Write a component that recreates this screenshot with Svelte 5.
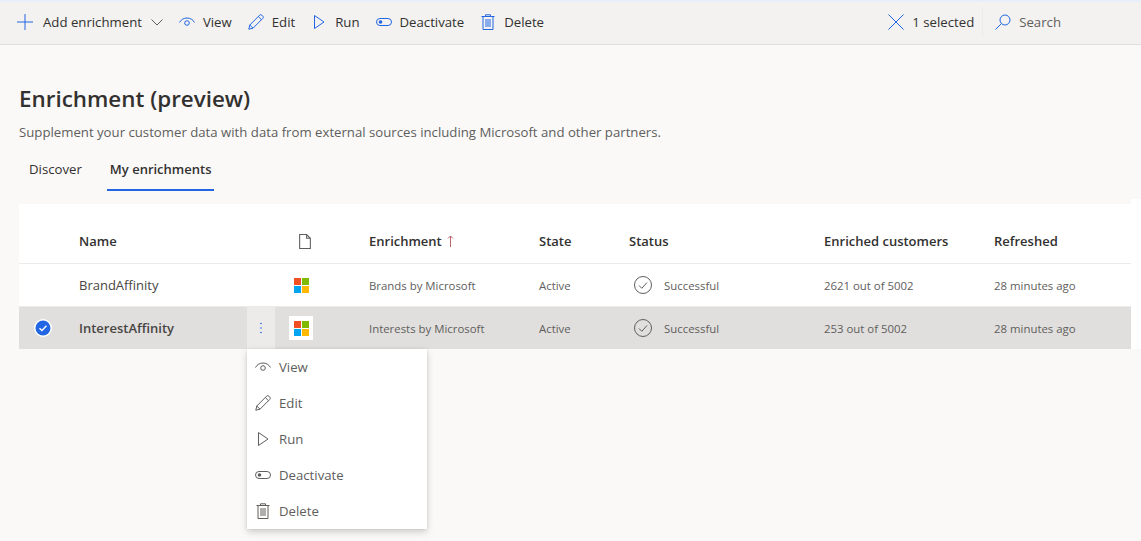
<script lang="ts">
  const rows = [
    { name: "BrandAffinity", enrichment: "Brands by Microsoft", state: "Active", status: "Successful", customers: "2621 out of 5002", refreshed: "28 minutes ago", selected: false },
    { name: "InterestAffinity", enrichment: "Interests by Microsoft", state: "Active", status: "Successful", customers: "253 out of 5002", refreshed: "28 minutes ago", selected: true },
  ];
  const actions = ["view", "edit", "run", "deactivate", "delete"];
  const labels: Record<string, string> = { view: "View", edit: "Edit", run: "Run", deactivate: "Deactivate", delete: "Delete" };
</script>

{#snippet icon(kind: string)}
  <svg class="icon" viewBox="0 0 16 16" fill="none" stroke="currentColor" stroke-width="1">
    {#if kind === "view"}
      <path d="M0.5 8.5C2 5.500 5 4 8 4s6 1.500 7.500 4.500" />
      <circle cx="8" cy="9" r="2.300" />
    {:else if kind === "edit"}
      <path d="M0.8 15.2l1-4.200L11.600 1.200a1.600 1.600 0 0 1 2.300 0l.9.9a1.600 1.600 0 0 1 0 2.300L5 14.200z" />
      <path d="M1.800 11l3.200 3.200M10.300 2.500l3.200 3.200" />
    {:else if kind === "run"}
      <path d="M3.500 1.500L13 8l-9.500 6.500z" />
    {:else if kind === "deactivate"}
      <rect x="0.5" y="4.5" width="15" height="7" rx="3.5" />
      <circle cx="4.500" cy="8" r="1.800" fill="currentColor" stroke="none" />
    {:else if kind === "delete"}
      <path d="M1.500 2.500h13M5.500 2.500V.8h5v1.700M3 2.500v13h10v-13M6 5v8M8 5v8M10 5v8" />
    {/if}
  </svg>
{/snippet}

{#snippet logo()}
  <svg class="logo" viewBox="0 0 15 15">
    <rect width="7" height="7" fill="#f25022" />
    <rect x="8" width="7" height="7" fill="#7fba00" />
    <rect y="8" width="7" height="7" fill="#00a4ef" />
    <rect x="8" y="8" width="7" height="7" fill="#ffb900" />
  </svg>
{/snippet}

<div class="page">
  <div class="commandbar">
    <div class="commands">
      <button class="cmd add">
        <svg class="icon plus" viewBox="0 0 16 16" fill="none" stroke="currentColor" stroke-width="1"><path d="M8 0v16M0 8h16" /></svg>
        <span>Add enrichment</span>
        <svg class="chevron" viewBox="0 0 12 12" fill="none" stroke="#605e5c" stroke-width="1"><path d="M0.500 3.500L6 9l5.500-5.500" /></svg>
      </button>
      {#each actions as a}
        <button class="cmd">
          {@render icon(a)}
          <span>{labels[a]}</span>
        </button>
      {/each}
    </div>
    <div class="side">
      <button class="cmd">
        <svg class="icon" viewBox="0 0 16 16" fill="none" stroke="currentColor" stroke-width="1"><path d="M0.500 0.500l15 15M15.500 0.500l-15 15" /></svg>
        <span>1 selected</span>
      </button>
      <div class="search">
        <svg class="icon" viewBox="0 0 16 16" fill="none" stroke="currentColor" stroke-width="1"><circle cx="10" cy="6" r="5" /><path d="M6.500 9.500L0.500 15.500" /></svg>
        <span>Search</span>
      </div>
    </div>
  </div>

  <header class="head">
    <h1>Enrichment (preview)</h1>
    <p>Supplement your customer data with data from external sources including Microsoft and other partners.</p>
    <nav class="tabs">
      <div class="tab">Discover</div>
      <div class="tab active">My enrichments</div>
    </nav>
  </header>

  <section class="table">
    <div class="row header">
      <div></div>
      <div>Name</div>
      <div></div>
      <div class="logocell">
        <svg class="docicon" viewBox="0 0 13 14" fill="none" stroke="#605e5c" stroke-width="1"><path d="M1.500 0.500h6.500l3.500 3.500v9.500h-10zM8 0.500v3.500h3.500" /></svg>
      </div>
      <div class="sorted">
        Enrichment
        <svg class="arrow" viewBox="0 0 7 12" fill="none" stroke="#a4262c" stroke-width="1"><path d="M3.500 12V1M1 3.500l2.500-2.500 2.500 2.500" /></svg>
      </div>
      <div>State</div>
      <div>Status</div>
      <div>Enriched customers</div>
      <div>Refreshed</div>
    </div>
    {#each rows as row}
      <div class="row" class:selected={row.selected}>
        <div class="check">
          {#if row.selected}
            <svg viewBox="0 0 18 18" class="checkmark">
              <circle cx="9" cy="9" r="9" fill="#fff" />
              <circle cx="9" cy="9" r="7.500" fill="#2266e3" />
              <path d="M5.500 9.200l2.400 2.300 4.600-4.700" fill="none" stroke="#fff" stroke-width="1.300" />
            </svg>
          {/if}
        </div>
        <div class="name">{row.name}</div>
        <div class="more">
          {#if row.selected}
            <svg viewBox="0 0 4 12" class="dots"><circle cx="2" cy="1.500" r="0.800" /><circle cx="2" cy="6" r="0.800" /><circle cx="2" cy="10.500" r="0.800" /></svg>
          {/if}
        </div>
        <div class="logocell"><span class="logobox">{@render logo()}</span></div>
        <div class="small">{row.enrichment}</div>
        <div class="small">{row.state}</div>
        <div class="small statuscell">
          <svg class="statusicon" viewBox="0 0 18 18" fill="none" stroke="#605e5c" stroke-width="1"><circle cx="9" cy="9" r="8.500" /><path d="M5 9.500l2.800 2.800L13 6.500" /></svg>
          <span>{row.status}</span>
        </div>
        <div class="small">{row.customers}</div>
        <div class="small">{row.refreshed}</div>
      </div>
    {/each}
    <div class="menu">
      {#each actions as a}
        <div class="menuitem">
          {@render icon(a)}
          <span>{labels[a]}</span>
        </div>
      {/each}
    </div>
  </section>
</div>

<style>
  :global(body) {
    margin: 0;
    background: #faf9f8;
  }
  .page {
    height: 541px;
    overflow: hidden;
    font-family: "Open Sans", "Noto Sans", sans-serif;
    font-size: 13.2px;
    color: #323130;
    background: #faf9f8;
  }
  .commandbar {
    height: 40px;
    box-sizing: content-box;
    border-top: 2px solid #e8eefa;
    border-bottom: 1px solid #e1dfdd;
    background: #f3f2f1;
    display: flex;
    justify-content: space-between;
    align-items: center;
    padding: 0 80px 2px 17px;
  }
  .commands,
  .side {
    display: flex;
    align-items: center;
    height: 100%;
  }
  .commands {
    gap: 16px;
  }
  .cmd {
    all: unset;
    display: flex;
    align-items: center;
    gap: 8px;
    color: #323130;
  }
  .commandbar .icon {
    color: #2266e3;
  }
  .icon {
    width: 16px;
    height: 16px;
    flex: none;
  }
  .add {
    gap: 10px;
  }
  .chevron {
    width: 12px;
    height: 12px;
    margin-left: -1px;
  }
  .side .search {
    display: flex;
    align-items: center;
    gap: 8px;
    height: 30px;
    margin-left: 8px;
    padding-left: 12px;
    border-left: 1px solid #edebe9;
    color: #605e5c;
  }
  .head {
    padding: 37px 19px 0;
  }
  h1 {
    margin: 0;
    font-size: 22.4px;
    line-height: 34px;
    font-weight: 600;
    color: #323130;
  }
  p {
    margin: 6px 0 0;
    line-height: 20px;
    color: #605e5c;
  }
  .tabs {
    display: flex;
    gap: 15px;
    margin-top: 10px;
  }
  .tab {
    padding: 7px 10px 10px 10px;
    line-height: 20px;
  }
  .tab.active {
    padding: 7px 3px 10px;
    font-size: 13px;
    font-weight: 600;
    border-bottom: 2px solid #2266e3;
  }
  .table {
    position: relative;
    margin: 13px 0 0 19px;
    padding: 16px 10px 0 0;
    background: #fff;
    height: 129px;
    font-size: 13px;
  }
  .table::after {
    content: "";
    position: absolute;
    top: -5px;
    right: 0;
    width: 10px;
    height: 5px;
    background: #fff;
  }
  .row {
    display: grid;
    grid-template-columns: 60px 168px 28px 94px 170px 90px 195px 170px 137px;
    height: 42px;
    border-bottom: 1px solid #edebe9;
    align-items: center;
  }
  .row.header {
    height: 42px;
    padding-bottom: 1px;
    font-weight: 600;
  }
  .row.selected {
    background: #e1dfdd;
    border-bottom: none;
  }
  .row.selected .name {
    font-weight: 600;
  }
  .name {
    color: #484644;
  }
  .check {
    display: flex;
    justify-content: center;
    margin-left: -12px;
  }
  .checkmark {
    width: 18px;
    height: 18px;
  }
  .more {
    height: 100%;
    display: flex;
    align-items: center;
    justify-content: center;
  }
  .row.selected .more {
    background: #edebe9;
  }
  .dots {
    width: 4px;
    height: 12px;
    fill: #2266e3;
  }
  .logocell {
    padding-left: 14px;
    display: flex;
    align-items: center;
  }
  .logobox {
    display: flex;
    align-items: center;
    justify-content: center;
    width: 24px;
    height: 24px;
  }
  .row.selected .logobox {
    background: #fff;
  }
  .logo {
    width: 15px;
    height: 15px;
  }
  .docicon {
    width: 14px;
    height: 15px;
    margin-left: 9px;
  }
  .sorted {
    display: flex;
    align-items: center;
    gap: 5px;
  }
  .arrow {
    width: 7px;
    height: 12px;
    opacity: 0.7;
  }
  .small {
    font-size: 11.4px;
    color: #605e5c;
  }
  .statuscell {
    display: flex;
    align-items: center;
    gap: 12px;
    padding-left: 5px;
  }
  .statusicon {
    width: 18px;
    height: 18px;
  }
  .menu {
    position: absolute;
    left: 228px;
    top: 145px;
    width: 180px;
    font-size: 13.2px;
    background: #fff;
    box-shadow: 0 3px 7px rgba(0, 0, 0, 0.18), 0 0 2px rgba(0, 0, 0, 0.1);
    color: #605e5c;
  }
  .menuitem {
    height: 36px;
    display: flex;
    align-items: center;
    gap: 8px;
    padding-left: 8px;
  }
</style>
